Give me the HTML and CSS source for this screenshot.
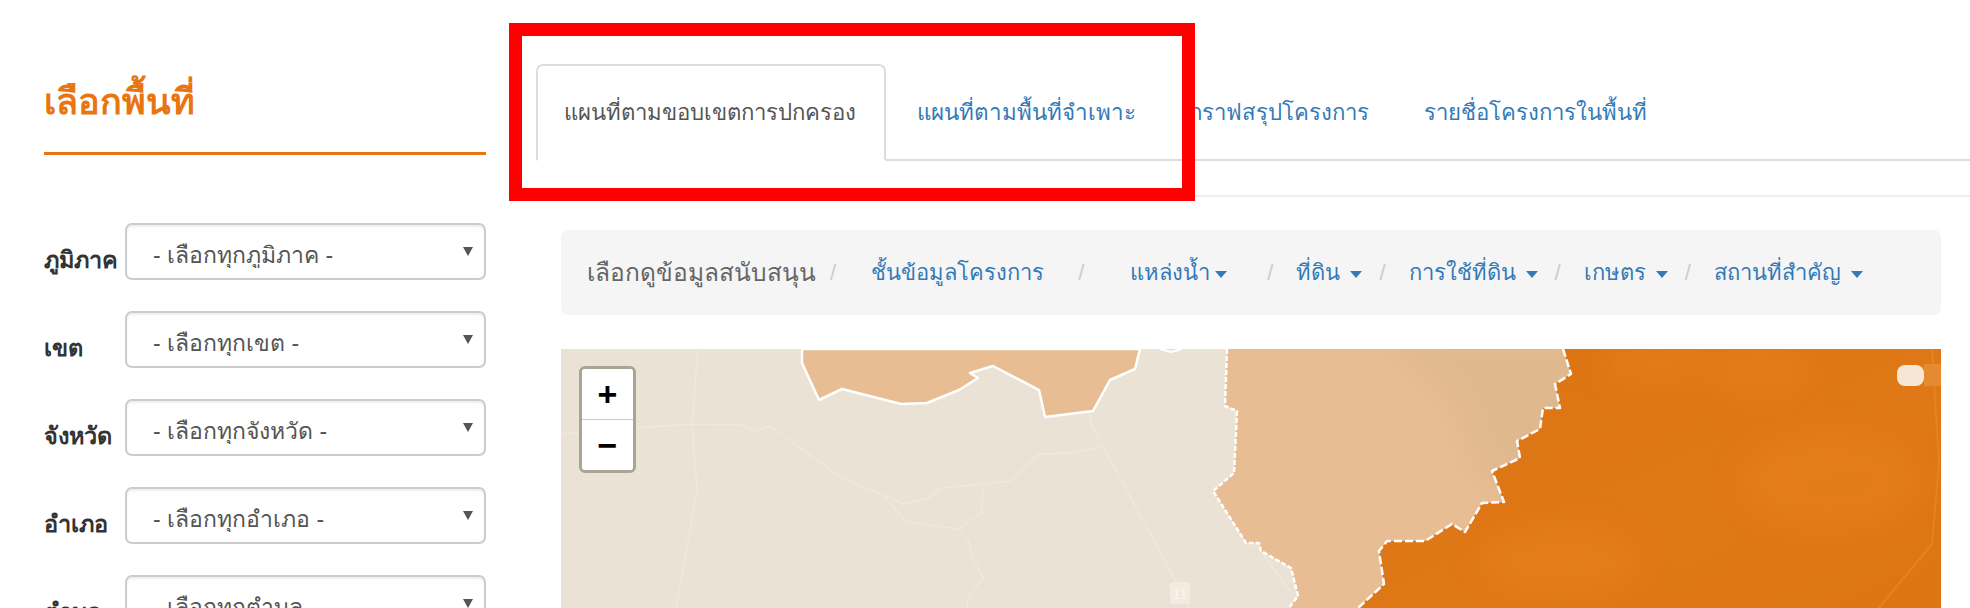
FILE: index.html
```html
<!DOCTYPE html>
<html lang="th">
<head>
    <meta charset="UTF-8">
    <title>เลือกพื้นที่</title>
    <link rel="stylesheet" href="styles.css">
</head>
<body>
    <aside class="sidebar">
        <h2 class="side-title">เลือกพื้นที่</h2>
        <form class="area-form">
            <div class="field">
                <label>ภูมิภาค</label>
                <div class="select-wrap"><select><option>- เลือกทุกภูมิภาค -</option></select></div>
            </div>
            <div class="field">
                <label>เขต</label>
                <div class="select-wrap"><select><option>- เลือกทุกเขต -</option></select></div>
            </div>
            <div class="field">
                <label>จังหวัด</label>
                <div class="select-wrap"><select><option>- เลือกทุกจังหวัด -</option></select></div>
            </div>
            <div class="field">
                <label>อำเภอ</label>
                <div class="select-wrap"><select><option>- เลือกทุกอำเภอ -</option></select></div>
            </div>
            <div class="field">
                <label>ตำบล</label>
                <div class="select-wrap"><select><option>- เลือกทุกตำบล -</option></select></div>
            </div>
        </form>
    </aside>

    <main class="content">
        <ul class="tabs">
            <li class="tab active"><a href="#">แผนที่ตามขอบเขตการปกครอง</a></li>
            <li class="tab tab-area"><a href="#">แผนที่ตามพื้นที่จำเพาะ</a></li>
            <li class="tab"><a href="#">กราฟสรุปโครงการ</a></li>
            <li class="tab"><a href="#">รายชื่อโครงการในพื้นที่</a></li>
        </ul>
        <div class="tab-gap"></div>

        <div class="layer-bar">
            <span class="bar-title">เลือกดูข้อมูลสนับสนุน</span>
            <span class="sep sep-first">/</span>
            <a class="bar-link layers" href="#">ชั้นข้อมูลโครงการ</a>
            <span class="sep sep-wide">/</span>
            <a class="bar-link water" href="#">แหล่งน้ำ<i class="caret"></i></a>
            <span class="sep sep-after-water">/</span>
            <a class="bar-link" href="#">ที่ดิน<i class="caret"></i></a>
            <span class="sep">/</span>
            <a class="bar-link" href="#">การใช้ที่ดิน<i class="caret"></i></a>
            <span class="sep">/</span>
            <a class="bar-link" href="#">เกษตร<i class="caret"></i></a>
            <span class="sep">/</span>
            <a class="bar-link" href="#">สถานที่สำคัญ<i class="caret"></i></a>
        </div>

        <div class="map">
            <svg class="map-canvas" viewBox="561 348 1380 260" preserveAspectRatio="none">
                <defs>
                    <linearGradient id="darkFill" x1="0" y1="0" x2="1" y2="1">
                        <stop offset="0" stop-color="#dc7412"/>
                        <stop offset="0.6" stop-color="#df7817"/>
                        <stop offset="1" stop-color="#dd7514"/>
                    </linearGradient>
                    <filter id="soft"><feGaussianBlur stdDeviation="14"/></filter>
                </defs>

                <rect x="561" y="348" width="1380" height="260" fill="#e9e2d5"/>

                <g class="roads">
                    <polyline points="698,348 692,423 697,490 676,608"/>
                    <polyline points="561,433 637,427 692,423 743,424 756,430 770,425 842,477 904,503 929,497 940,487 984,483 1011,480 1039,453 1069,452 1101,446"/>
                    <polyline points="1076,348 1090,415 1092,425 1177,582"/>
                    <polyline points="883,495 907,521 958,528 981,512 984,483"/>
                    <polyline points="958,528 969,540 972,557 983,577 967,598 968,608"/>
                    <polyline points="1177,582 1190,608"/>
                    <polyline points="1262,552 1290,590"/>
                </g>
                <rect x="1170" y="581" width="20" height="22" rx="2" fill="#f2ebdf"/>
                <text class="shield-no" x="1180" y="598">11</text>

                <polygon class="light" points="802,348 802,362 819,399 842,388 901,403 927,402 959,389 978,377 970,372 993,365 1039,389 1045,416 1093,410 1110,379 1135,368 1140,348"/>
                <polygon class="edge" points="802,348 802,362 819,399 842,388 901,403 927,402 959,389 978,377 970,372 993,365 1039,389 1045,416 1093,410 1110,379 1135,368 1140,348"/>
                <polyline class="edge edge-thin" points="1160,348 1171,351 1182,348"/>

                <polygon class="light" points="1227,348 1225,405 1237,410 1234,472 1213,490 1246,542 1259,542 1261,550 1291,567 1298,595 1288,608 1357,608 1384,583 1379,550 1387,540 1425,540 1452,523 1465,531 1482,502 1504,501 1492,470 1520,457 1517,440 1540,428 1543,407 1560,407 1555,383 1571,373 1563,348"/>
                <polygon class="light-shade" filter="url(#soft)" points="1380,330 1590,330 1590,510 1480,480 1450,400"/>

                <polygon class="dark" points="1563,348 1571,373 1555,383 1560,407 1543,407 1540,428 1517,440 1520,457 1492,470 1504,501 1482,502 1465,531 1452,523 1425,540 1387,540 1379,550 1384,583 1357,608 1941,608 1941,348"/>
                <g class="dark-glow" filter="url(#soft)">
                    <ellipse cx="1660" cy="362" rx="60" ry="20"/>
                    <ellipse cx="1760" cy="370" rx="50" ry="28"/>
                    <ellipse cx="1830" cy="480" rx="90" ry="50"/>
                    <ellipse cx="1560" cy="560" rx="80" ry="36"/>
                </g>
                <polyline class="road-dark" points="1932,348 1939,463 1932,543 1878,608"/>

                <polyline class="edge dashed fine" points="1227,348 1225,405 1237,410 1234,472 1213,490 1246,542 1259,542 1261,550 1291,567 1298,595 1288,608"/>
                <polyline class="edge dashed" points="1563,348 1571,373 1555,383 1560,407 1543,407 1540,428 1517,440 1520,457 1492,470 1504,501 1482,502 1465,531 1452,523 1425,540 1387,540 1379,550 1384,583 1357,608"/>

                <rect x="1924" y="363" width="17" height="22" fill="#e58a33"/>
                <rect x="1897" y="364" width="27" height="21" rx="8" fill="#f8e6d4"/>
            </svg>

            <div class="zoom-box">
                <a class="zoom-btn" href="#">+</a>
                <a class="zoom-btn" href="#">−</a>
            </div>
        </div>
    </main>

    <!-- red highlight drawn over the tabs -->
    <div class="highlight"></div>
</body>
</html>
```

FILE: styles.css
```css
html, body {
    margin: 0;
    height: 608px;
    overflow: hidden;
}

body {
    display: flex;
    background: #fff;
    font-family: "Liberation Sans", "Noto Sans", sans-serif;
    font-size: 22px;
    color: #333;
}

a {
    color: #337ab7;
    text-decoration: none;
}

/* left column */
.sidebar {
    box-sizing: border-box;
    width: 536px;
    padding: 0 50px 0 44px;
    flex-shrink: 0;
}

.side-title {
    margin: 0;
    height: 155px;
    box-sizing: border-box;
    padding-top: 80px;
    border-bottom: 3px solid #e8750f;
    font-size: 36px;
    line-height: 44px;
    font-weight: bold;
    color: #e8750f;
}

.area-form {
    padding-top: 68px;
}

.field {
    display: flex;
    align-items: flex-end;
    height: 57px;
    margin-bottom: 31px;
}

.field label {
    width: 81px;
    font-weight: bold;
    font-size: 23.5px;
    line-height: 40px;
    white-space: nowrap;
}

.select-wrap {
    position: relative;
    flex: 1;
}

.select-wrap::after {
    content: "";
    position: absolute;
    top: 24px;
    right: 13px;
    border-left: 5px solid transparent;
    border-right: 5px solid transparent;
    border-top: 9px solid #555;
}

.select-wrap select {
    appearance: none;
    box-sizing: border-box;
    display: block;
    width: 100%;
    height: 57px;
    padding: 6px 0 0 26px;
    border: 2px solid #ccc;
    border-radius: 7px;
    background: #fff;
    box-shadow: inset 0 2px 2px rgba(0, 0, 0, 0.07);
    font-family: inherit;
    font-size: 23px;
    color: #555;
}

/* right column */
.content {
    flex: 1;
    min-width: 0;
}

.tabs {
    display: flex;
    box-sizing: border-box;
    height: 161px;
    margin: 0;
    padding: 64px 0 0;
    list-style: none;
    border-bottom: 2px solid #ddd;
}

.tab {
    box-sizing: border-box;
    height: 97px;
    padding: 0 22px 0 29px;
    line-height: 94px;
    font-size: 22.2px;
    white-space: nowrap;
    border: 2px solid transparent;
    border-radius: 7px 7px 0 0;
}

.tab-area {
    padding-right: 20px;
    font-size: 22.4px;
}

.tab.active {
    width: 350px;
    padding-left: 26px;
    border-color: #ddd #ddd #fff;
    background: #fff;
}

.tab.active a {
    color: #555;
}

.tab-gap {
    height: 34px;
    border-bottom: 2px solid #eee;
}

.layer-bar {
    display: flex;
    align-items: center;
    box-sizing: border-box;
    height: 85px;
    margin: 33px 29px 34px 25px;
    padding: 0 26px;
    background: #f5f5f5;
    border-radius: 7px;
    white-space: nowrap;
}

.bar-title {
    font-size: 24.5px;
    color: #666;
}

.sep {
    margin: 0 23px 0 17px;
    color: #ccc;
}

.sep-first {
    margin: 0 35px 0 14px;
}

.sep-wide {
    margin: 0 46px 0 34px;
}

.sep-after-water {
    margin-left: 40px;
}

.caret {
    display: inline-block;
    margin-left: 10px;
    vertical-align: middle;
    border-left: 6px solid transparent;
    border-right: 6px solid transparent;
    border-top: 7px solid #337ab7;
}

.water .caret {
    margin-left: 5px;
}

.map {
    position: relative;
    height: 260px;
    margin: 0 29px 0 25px;
    overflow: hidden;
}

.map-canvas {
    display: block;
    width: 100%;
    height: 100%;
}

.roads polyline {
    fill: none;
    stroke: #efe8dc;
    stroke-width: 1.5;
}

.light {
    fill: #e8bd93;
}

.light-shade {
    fill: #dfb88e;
    opacity: 0.8;
}

.dark {
    fill: url(#darkFill);
}

.dark-glow {
    fill: #e6801f;
    opacity: 0.6;
}

.road-dark {
    fill: none;
    stroke: #e6821f;
    stroke-width: 2;
}

.edge {
    fill: none;
    stroke: #fff;
    stroke-width: 2.5;
    stroke-linejoin: round;
}

.edge-thin {
    stroke-width: 2;
}

.edge.dashed {
    stroke-dasharray: 8 3;
}

.edge.fine {
    stroke-dasharray: 5 2;
}

.shield-no {
    font-size: 15px;
    text-anchor: middle;
    fill: #fbf7ef;
}

.zoom-box {
    position: absolute;
    top: 17px;
    left: 18px;
    width: 51px;
    border: 3px solid #aaa497;
    border-radius: 6px;
    overflow: hidden;
}

.zoom-btn {
    display: block;
    height: 50px;
    background: #fff;
    color: #000;
    font-weight: bold;
    font-size: 34px;
    line-height: 50px;
    text-align: center;
}

.zoom-btn:first-child {
    border-bottom: 1px solid #ccc;
}

.highlight {
    position: absolute;
    box-sizing: border-box;
    left: 509px;
    top: 23px;
    width: 686px;
    height: 178px;
    border: 13px solid #f00;
}
```
